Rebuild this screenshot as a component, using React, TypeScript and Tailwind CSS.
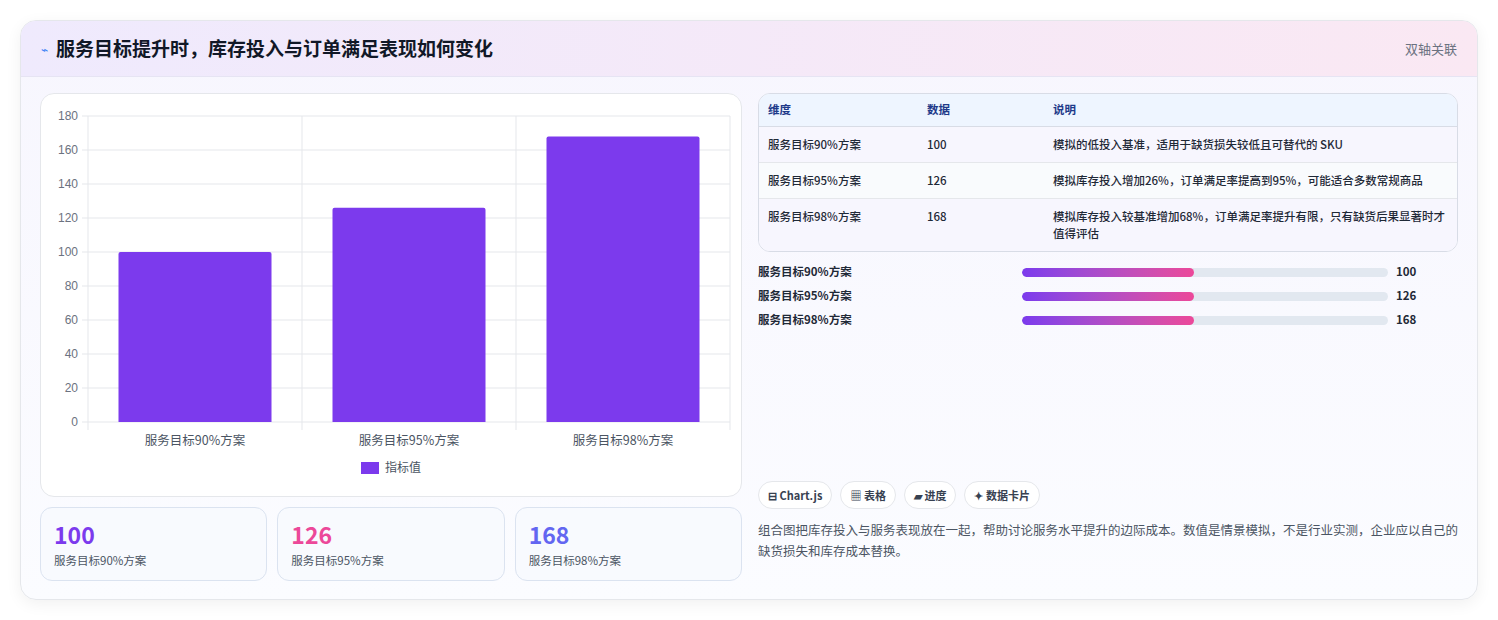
import React from "react";

const rows = [
  { name: "服务目标90%方案", v: 100, d: "模拟的低投入基准，适用于缺货损失较低且可替代的 SKU" },
  { name: "服务目标95%方案", v: 126, d: "模拟库存投入增加26%，订单满足率提高到95%，可能适合多数常规商品" },
  { name: "服务目标98%方案", v: 168, d: "模拟库存投入较基准增加68%，订单满足率提升有限，只有缺货后果显著时才值得评估" },
];

function Chart() {
  const W = 700, H = 402;
  const x0 = 47, x1 = 689, yTop = 22, y0 = 328;
  const sc = (y0 - yTop) / 180;
  const cw = (x1 - x0) / 3;
  return (
    <svg width={W} height={H} className="block">
      {Array.from({ length: 10 }, (_, i) => i * 20).map((t) => {
        const y = y0 - t * sc;
        return (
          <g key={t}>
            <line x1={x0 - 6} x2={x1} y1={y} y2={y} stroke="#e5e7eb" />
            <text x={x0 - 10} y={y + 4} textAnchor="end" fontSize="12" fill="#6b7280" fontFamily="Liberation Sans, sans-serif">{t}</text>
          </g>
        );
      })}
      {[0, 1, 2, 3].map((i) => (
        <line key={i} x1={x0 + i * cw} x2={x0 + i * cw} y1={yTop} y2={y0 + 8} stroke="#e5e7eb" />
      ))}
      {rows.map((r, i) => {
        const bw = 153;
        const bx = x0 + i * cw + (cw - bw) / 2;
        const h = r.v * sc;
        return (
          <g key={i}>
            <path d={`M${bx} ${y0} V${y0 - h + 2} Q${bx} ${y0 - h} ${bx + 2} ${y0 - h} H${bx + bw - 2} Q${bx + bw} ${y0 - h} ${bx + bw} ${y0 - h + 2} V${y0} Z`} fill="#7c3aed" />
            <text x={x0 + i * cw + cw / 2} y={y0 + 23} textAnchor="middle" fontSize="12.5" fill="#4b5563" fontFamily="Noto Sans CJK SC, sans-serif">{r.name}</text>
          </g>
        );
      })}
      <rect x={320} y={368} width={18} height={12} fill="#7c3aed" />
      <text x={344} y={378} fontSize="12" fill="#4b5563" fontFamily="Noto Sans CJK SC, sans-serif">指标值</text>
    </svg>
  );
}

export default function App() {
  const colors = ["text-[#7c3aed]", "text-[#ec4899]", "text-[#6366f1]"];
  return (
    <div className="w-[1498px] h-[620px] bg-white p-[20px] pb-0" style={{ fontFamily: '"Noto Sans CJK SC", "Noto Sans", sans-serif' }}>
      <div className="w-[1458px] h-[580px] rounded-[16px] border border-[#e5e7eb] overflow-hidden shadow-[0_4px_16px_rgba(0,0,0,0.06)] bg-gradient-to-b from-[#f7f6fe] to-[#fbfcff]">
        <div className="h-[56px] flex items-center justify-between px-[20px] bg-gradient-to-r from-[#efeafd] to-[#fae8f3] border-b border-[#e6e4f3]">
          <div className="flex items-center gap-[8px]">
            <span className="text-[#3b82f6] text-[12px]">⌁</span>
            <span className="text-[19px] font-bold text-[#111827]">服务目标提升时，库存投入与订单满足表现如何变化</span>
          </div>
          <span className="text-[13px] text-[#6b7280]">双轴关联</span>
        </div>
        <div className="flex gap-[16px] px-[19px] pt-[16px]">
          <div className="w-[702px] flex flex-col gap-[10px]">
            <div className="h-[404px] rounded-[14px] border border-[#e5e7eb] bg-white overflow-hidden">
              <Chart />
            </div>
            <div className="grid grid-cols-3 gap-[10px]">
              {rows.map((r, i) => (
                <div key={i} className="h-[74px] rounded-[12px] border border-[#dbe3f0] bg-[#f8fafe] px-[13px] pt-[10px]">
                  <div className={`text-[23px] font-bold leading-[32px] ${colors[i]}`}>{r.v}</div>
                  <div className="text-[11.5px] text-[#4b5563] mt-[2px]">{r.name}</div>
                </div>
              ))}
            </div>
          </div>
          <div className="w-[702px] flex flex-col">
            <div className="rounded-[12px] border border-[#d8dce6] overflow-hidden bg-white text-[11.5px]">
              <div className="flex h-[33px] items-center bg-[#eef5ff] border-b border-[#d8dce6] font-bold text-[#1e3a8a]">
                <div className="w-[168px] pl-[9px]">维度</div>
                <div className="w-[126px]">数据</div>
                <div className="flex-1">说明</div>
              </div>
              {rows.map((r, i) => (
                <div key={i} className={`flex py-[9px] text-[#1f2937] font-medium leading-[17px] ${i < 2 ? "border-b border-[#e5e7eb]" : ""} ${i === 1 ? "bg-[#f9fbfd]" : "bg-[#f7f6fe]"}`}>
                  <div className="w-[168px] pl-[9px]">{r.name}</div>
                  <div className="w-[126px]">{r.v}</div>
                  <div className="flex-1 pr-[8px]">{r.d}</div>
                </div>
              ))}
            </div>
            <div className="flex flex-col gap-[8px] mt-[12px]">
              {rows.map((r, i) => (
                <div key={i} className="flex items-center h-[16px] text-[11.5px] font-bold text-[#1f2937]">
                  <div className="w-[264px]">{r.name}</div>
                  <div className="w-[366px] h-[9px] rounded-full bg-[#e2e8f0] overflow-hidden">
                    <div className="h-full w-[47%] rounded-full bg-gradient-to-r from-[#7c3aed] to-[#ec4899]" />
                  </div>
                  <div className="ml-[8px]">{r.v}</div>
                </div>
              ))}
            </div>
            <div className="mt-auto flex gap-[8px] mb-[10px]">
              {["⊟ Chart.js", "▦ 表格", "▰ 进度", "✦ 数据卡片"].map((c) => (
                <span key={c} className="h-[28px] px-[9px] flex items-center rounded-full border border-[#e5e7eb] bg-white text-[11px] font-bold text-[#374151]">{c}</span>
              ))}
            </div>
            <p className="text-[12.5px] leading-[21px] text-[#4b5563] mb-[20px]">组合图把库存投入与服务表现放在一起，帮助讨论服务水平提升的边际成本。数值是情景模拟，不是行业实测，企业应以自己的缺货损失和库存成本替换。</p>
          </div>
        </div>
      </div>
    </div>
  );
}
